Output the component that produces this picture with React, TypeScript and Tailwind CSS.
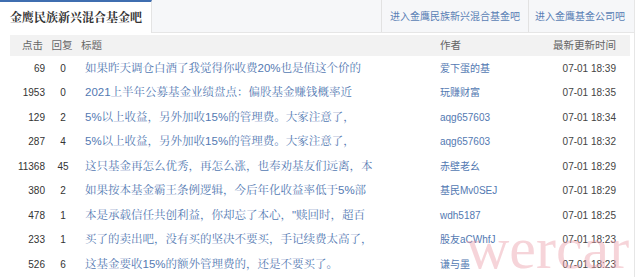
const rows = [
  { click: '69', reply: '0', title: '如果昨天调仓白酒了我觉得你收费20%也是值这个价的', author: '爱下蛋的基', time: '07-01 18:39' },
  { click: '1953', reply: '0', title: '2021上半年公募基金业绩盘点：偏股基金赚钱概率近', author: '玩赚财富', time: '07-01 18:35' },
  { click: '129', reply: '2', title: '5%以上收益，另外加收15%的管理费。大家注意了，', author: 'aqg657603', time: '07-01 18:34' },
  { click: '287', reply: '4', title: '5%以上收益，另外加收15%的管理费。大家注意了，', author: 'aqg657603', time: '07-01 18:32' },
  { click: '11368', reply: '45', title: '这只基金再怎么优秀，再怎么涨，也奉劝基友们远离，本', author: '赤壁老幺', time: '07-01 18:29' },
  { click: '380', reply: '2', title: '如果按本基金霸王条例逻辑，今后年化收益率低于5%部', author: '基民Mv0SEJ', time: '07-01 18:29' },
  { click: '478', reply: '1', title: '本是承载信任共创利益，你却忘了本心，"赎回时，超百', author: 'wdh5187', time: '07-01 18:25' },
  { click: '233', reply: '1', title: '买了的卖出吧，没有买的坚决不要买，手记续费太高了，', author: '股友aCWhfJ', time: '07-01 18:23' },
  { click: '526', reply: '6', title: '这基金要收15%的额外管理费的，还是不要买了。', author: '谦与墨', time: '07-01 18:23' },
];

const serif = "font-['Liberation_Sans','Noto_Serif_CJK_SC','Noto_Sans_CJK_SC',serif]";

export default function App() {
  return (
    <div className="relative w-[640px] h-[277px] overflow-hidden bg-white font-['Liberation_Sans','Noto_Sans_CJK_SC',sans-serif]">
      <div className="w-[635px] h-full border-r border-[#e6e6e6]">
        {/* Tabs */}
        <div className="flex h-[33px] bg-[#f6f7f9]">
          <div className={`w-[152px] shrink-0 bg-white border-t-2 border-[#3f6eb0] border-r border-r-[#e4e4e4] flex items-center pl-[10px] text-[12px] font-bold text-[#333] whitespace-nowrap ${serif}`}>
            金鹰民族新兴混合基金吧
          </div>
          <div className="flex flex-1 border-b border-[#e6e6e6]">
            <div className="flex-1" />
            <div className="flex items-center px-[8px] border-l border-[#e2e2e2] text-[10px] text-[#5a7fb5] whitespace-nowrap">
              进入金鹰民族新兴混合基金吧
            </div>
            <div className="flex items-center pl-[6px] pr-[9px] border-l border-[#e2e2e2] text-[10px] text-[#5a7fb5] whitespace-nowrap">
              进入金鹰基金公司吧
            </div>
          </div>
        </div>

        {/* Table */}
        <div className="pl-[10px] pr-[4px] pt-[2px]">
          <div className="flex items-center h-[21px] bg-[#f2f2f2] text-[10.5px] text-[#666] whitespace-nowrap">
            <div className="w-[33px] text-right">点击</div>
            <div className="w-[38px] text-center">回复</div>
            <div className="w-[359px]">标题</div>
            <div className="w-[100px]">作者</div>
            <div className="w-[76px] text-right">最新更新时间</div>
          </div>
          {rows.map((r, i) => (
            <div key={i} className="flex items-center h-[24.5px] text-[10px] whitespace-nowrap">
              <div className="w-[35px] text-right text-[#333]">{r.click}</div>
              <div className="w-[36px] text-center text-[#333]">{r.reply}</div>
              <div className={`w-[359px] pl-[4px] text-[11.5px] text-[#5379b2] overflow-hidden ${serif}`}>{r.title}</div>
              <div className="w-[100px] text-[#5379b2]">{r.author}</div>
              <div className="w-[76px] text-right text-[#444]">{r.time}</div>
            </div>
          ))}
        </div>
      </div>

      {/* watermark */}
      <div className="absolute left-[466px] top-[218px] text-[60px] leading-none text-[#eaa0aa]/45 font-['Liberation_Serif',serif] pointer-events-none">
        wercar
      </div>
    </div>
  );
}
